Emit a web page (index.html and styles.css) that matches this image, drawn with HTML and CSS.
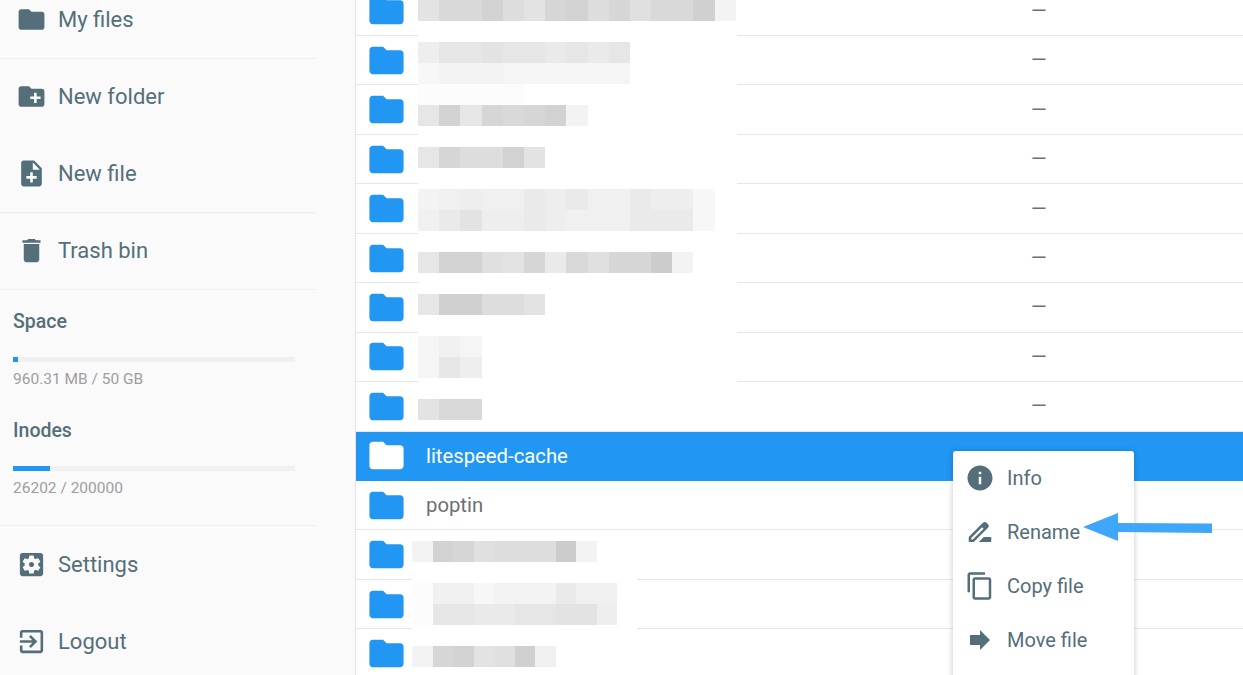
FILE: index.html
```html
<!DOCTYPE html>
<html lang="en">
<head>
<meta charset="UTF-8">
<title>File manager</title>
<link rel="stylesheet" href="styles.css">
</head>
<body>

<svg class="defs" aria-hidden="true">
    <symbol id="i-folder" viewBox="0 0 24 24"><path d="M10 4H4c-1.1 0-1.99.9-1.99 2L2 18c0 1.1.9 2 2 2h16c1.1 0 2-.9 2-2V8c0-1.1-.9-2-2-2h-8l-2-2z"/></symbol>
    <symbol id="i-new-folder" viewBox="0 0 24 24"><path d="M20 6h-8l-2-2H4c-1.11 0-1.99.89-1.99 2L2 18c0 1.11.89 2 2 2h16c1.11 0 2-.89 2-2V8c0-1.11-.89-2-2-2zm-1 8h-3v3h-2v-3h-3v-2h3V9h2v3h3v2z"/></symbol>
    <symbol id="i-new-file" viewBox="0 0 24 24"><path d="M14 2H6c-1.1 0-1.99.9-1.99 2L4 20c0 1.1.89 2 1.99 2H18c1.1 0 2-.9 2-2V8l-6-6zm2 14h-3v3h-2v-3H8v-2h3v-3h2v3h3v2zm-3-7V3.5L18.5 9H13z"/></symbol>
    <symbol id="i-trash" viewBox="0 0 24 24"><path d="M6 19c0 1.1.9 2 2 2h8c1.1 0 2-.9 2-2V7H6v12zM19 4h-3.5l-1-1h-5l-1 1H5v2h14V4z"/></symbol>
    <symbol id="i-settings" viewBox="0 0 24 24"><path d="M12 10c-1.1 0-2 .9-2 2s.9 2 2 2 2-.9 2-2-.9-2-2-2zm7-7H5c-1.11 0-2 .9-2 2v14c0 1.1.89 2 2 2h14c1.11 0 2-.9 2-2V5c0-1.1-.89-2-2-2zm-1.75 9c0 .23-.02.46-.05.68l1.48 1.16c.13.11.17.3.08.45l-1.4 2.42c-.09.15-.27.21-.43.15l-1.74-.7c-.36.28-.76.51-1.18.69l-.26 1.85c-.03.17-.18.3-.35.3h-2.8c-.17 0-.32-.13-.35-.29l-.26-1.85c-.43-.18-.82-.41-1.18-.69l-1.74.7c-.16.06-.34 0-.43-.15l-1.4-2.42c-.09-.15-.05-.34.08-.45l1.48-1.16c-.03-.23-.05-.46-.05-.69 0-.23.02-.46.05-.68l-1.48-1.16c-.13-.11-.17-.3-.08-.45l1.4-2.42c.09-.15.27-.21.43-.15l1.74.7c.36-.28.76-.51 1.18-.69l.26-1.85c.03-.17.18-.3.35-.3h2.8c.17 0 .32.13.35.29l.26 1.85c.43.18.82.41 1.18.69l1.74-.7c.16-.06.34 0 .43.15l1.4 2.42c.09.15.05.34-.08.45l-1.48 1.16c.03.23.05.46.05.69z"/></symbol>
    <symbol id="i-logout" viewBox="0 0 24 24"><path d="M10.09 15.59L11.5 17l5-5-5-5-1.41 1.41L12.67 11H3v2h9.67l-2.58 2.59zM19 3H5c-1.11 0-2 .9-2 2v4h2V5h14v14H5v-4H3v4c0 1.1.89 2 2 2h14c1.1 0 2-.9 2-2V5c0-1.1-.9-2-2-2z"/></symbol>
    <symbol id="i-info" viewBox="0 0 24 24"><path d="M12 2C6.48 2 2 6.48 2 12s4.48 10 10 10 10-4.48 10-10S17.52 2 12 2zm1 15h-2v-6h2v6zm0-8h-2V7h2v2z"/></symbol>
    <symbol id="i-rename" viewBox="0 0 24 24"><path d="M18.41 5.8L17.2 4.59c-.78-.78-2.05-.78-2.83 0l-2.68 2.68L3 15.96V20h4.04l8.74-8.74 2.63-2.63c.79-.78.79-2.05 0-2.83zM6.21 18H5v-1.21l8.66-8.66 1.21 1.21L6.21 18zM11 20l4-4h6v4H11z"/></symbol>
    <symbol id="i-copy" viewBox="0 0 24 24"><path d="M16 1H4c-1.1 0-2 .9-2 2v14h2V3h12V1zm3 4H8c-1.1 0-2 .9-2 2v14c0 1.1.9 2 2 2h11c1.1 0 2-.9 2-2V7c0-1.1-.9-2-2-2zm0 16H8V7h11v14z"/></symbol>
    <symbol id="i-move" viewBox="0 0 24 24"><path d="M12 8V4l8 8-8 8v-4H4V8z"/></symbol>
</svg>

<aside class="sidebar">
    <div class="nav-group first ruled">
        <a class="nav-item"><svg class="nav-icon"><use href="#i-folder"/></svg>My files</a>
    </div>
    <div class="nav-group ruled thick">
        <a class="nav-item"><svg class="nav-icon"><use href="#i-new-folder"/></svg>New folder</a>
        <a class="nav-item"><svg class="nav-icon"><use href="#i-new-file"/></svg>New file</a>
    </div>
    <div class="nav-group ruled">
        <a class="nav-item"><svg class="nav-icon"><use href="#i-trash"/></svg>Trash bin</a>
    </div>

    <div class="usage ruled">
        <h3>Space</h3>
        <div class="bar"><div class="bar-fill" style="width:1.92%"></div></div>
        <p>960.31 MB / 50 GB</p>
        <h3>Inodes</h3>
        <div class="bar"><div class="bar-fill" style="width:13.1%"></div></div>
        <p>26202 / 200000</p>
    </div>

    <div class="nav-group last">
        <a class="nav-item"><svg class="nav-icon"><use href="#i-settings"/></svg>Settings</a>
        <a class="nav-item"><svg class="nav-icon"><use href="#i-logout"/></svg>Logout</a>
    </div>
</aside>

<main class="files">
    <div class="file-list">
        <div class="file-row"><svg class="folder"><use href="#i-folder"/></svg><span class="file-name"></span><span class="file-size">—</span></div>
        <div class="file-row"><svg class="folder"><use href="#i-folder"/></svg><span class="file-name"></span><span class="file-size">—</span></div>
        <div class="file-row"><svg class="folder"><use href="#i-folder"/></svg><span class="file-name"></span><span class="file-size">—</span></div>
        <div class="file-row"><svg class="folder"><use href="#i-folder"/></svg><span class="file-name"></span><span class="file-size">—</span></div>
        <div class="file-row"><svg class="folder"><use href="#i-folder"/></svg><span class="file-name"></span><span class="file-size">—</span></div>
        <div class="file-row"><svg class="folder"><use href="#i-folder"/></svg><span class="file-name"></span><span class="file-size">—</span></div>
        <div class="file-row"><svg class="folder"><use href="#i-folder"/></svg><span class="file-name"></span><span class="file-size">—</span></div>
        <div class="file-row"><svg class="folder"><use href="#i-folder"/></svg><span class="file-name"></span><span class="file-size">—</span></div>
        <div class="file-row"><svg class="folder"><use href="#i-folder"/></svg><span class="file-name"></span><span class="file-size">—</span></div>
        <div class="file-row selected"><svg class="folder"><use href="#i-folder"/></svg><span class="file-name">litespeed-cache</span></div>
        <div class="file-row"><svg class="folder"><use href="#i-folder"/></svg><span class="file-name">poptin</span></div>
        <div class="file-row"><svg class="folder"><use href="#i-folder"/></svg><span class="file-name"></span></div>
        <div class="file-row"><svg class="folder"><use href="#i-folder"/></svg><span class="file-name"></span></div>
        <div class="file-row"><svg class="folder"><use href="#i-folder"/></svg><span class="file-name"></span></div>
    </div>

    <!-- redacted names, pixelated -->
    <div class="mosaic upper">
        <div class="line"><i class="e3"></i><i class="d9"></i><i class="d9"></i><i class="d2"></i><i class="dd"></i><i class="e3"></i><i class="d6"></i><i class="d2"></i><i class="dd"></i><i class="d6"></i><i class="e0"></i><i class="d9"></i><i class="d9"></i><i class="d0"></i><i class="f3"></i></div>
        <div class="line"></div>
        <div class="line"><i class="ee"></i><i class="e6"></i><i class="e6"></i><i class="e3"></i><i class="e6"></i><i class="e6"></i><i class="ea"></i><i class="e6"></i><i class="ea"></i><i class="e6"></i></div>
        <div class="line"><i class="f7"></i><i class="f3"></i><i class="f3"></i><i class="f3"></i><i class="f5"></i><i class="f5"></i><i class="f5"></i><i class="f5"></i><i class="f5"></i><i class="f5"></i></div>
        <div class="line"><i class="fc"></i><i class="fc"></i><i class="fc"></i><i class="fc"></i><i class="fc"></i></div>
        <div class="line"><i class="e6"></i><i class="d2"></i><i class="e6"></i><i class="d6"></i><i class="d9"></i><i class="d6"></i><i class="d2"></i><i class="f3"></i></div>
        <div class="line"></div>
        <div class="line"><i class="e6"></i><i class="d6"></i><i class="dd"></i><i class="dd"></i><i class="d2"></i><i class="e3"></i></div>
        <div class="line"></div>
        <div class="line"><i class="f3"></i><i class="f0"></i><i class="ee"></i><i class="f0"></i><i class="f0"></i><i class="ea"></i><i class="ee"></i><i class="ea"></i><i class="f0"></i><i class="f0"></i><i class="ea"></i><i class="ee"></i><i class="ee"></i><i class="f7"></i></div>
        <div class="line"><i class="f0"></i><i class="ea"></i><i class="e3"></i><i class="ee"></i><i class="ee"></i><i class="ea"></i><i class="ee"></i><i class="f0"></i><i class="f0"></i><i class="f0"></i><i class="ea"></i><i class="ea"></i><i class="ea"></i><i class="f7"></i></div>
        <div class="line"></div>
        <div class="line"><i class="e6"></i><i class="d2"></i><i class="d2"></i><i class="e0"></i><i class="e3"></i><i class="d6"></i><i class="ea"></i><i class="d9"></i><i class="e0"></i><i class="d6"></i><i class="d6"></i><i class="cc"></i><i class="f3"></i></div>
        <div class="line"></div>
        <div class="line"><i class="e6"></i><i class="d0"></i><i class="d0"></i><i class="dd"></i><i class="dd"></i><i class="e3"></i></div>
        <div class="line"></div>
        <div class="line"><i class="f5"></i><i class="f0"></i><i class="f5"></i></div>
        <div class="line"><i class="f5"></i><i class="e6"></i><i class="ee"></i></div>
        <div class="line"></div>
        <div class="line"><i class="e3"></i><i class="d9"></i><i class="d9"></i></div>
    </div>
    <div class="mosaic lower">
        <div class="line"><i class="f3"></i><i class="d2"></i><i class="d6"></i><i class="e0"></i><i class="dd"></i><i class="dd"></i><i class="dd"></i><i class="cc"></i><i class="f3"></i></div>
        <div class="line"></div>
        <div class="line"><i class="fc"></i><i class="f0"></i><i class="f0"></i><i class="f7"></i><i class="f3"></i><i class="f3"></i><i class="f3"></i><i class="ea"></i><i class="f0"></i><i class="f0"></i></div>
        <div class="line"><i class="fc"></i><i class="e6"></i><i class="e6"></i><i class="ea"></i><i class="ea"></i><i class="e6"></i><i class="e6"></i><i class="e3"></i><i class="e3"></i><i class="ee"></i></div>
        <div class="line"></div>
        <div class="line"><i class="f3"></i><i class="d6"></i><i class="d2"></i><i class="e3"></i><i class="e0"></i><i class="d0"></i><i class="f0"></i></div>
    </div>

    <ul class="context-menu">
        <li><svg class="menu-icon"><use href="#i-info"/></svg>Info</li>
        <li><svg class="menu-icon"><use href="#i-rename"/></svg>Rename</li>
        <li><svg class="menu-icon"><use href="#i-copy"/></svg>Copy file</li>
        <li><svg class="menu-icon"><use href="#i-move"/></svg>Move file</li>
    </ul>

    <svg class="callout" viewBox="0 0 130 28"><path d="M0 14L35 0V10L129 10.5V20L35 19V28z"/></svg>
</main>

</body>
</html>
```

FILE: styles.css
```css
/* ─── Layout ─────────────────────────────────────────────────── */
*{box-sizing:border-box;margin:0;padding:0}
body{
    font-family:Roboto,"Liberation Sans",sans-serif;
    display:flex;height:100vh;overflow:hidden;background:#fff;
}
.defs{display:none}

/* ─── Sidebar ────────────────────────────────────────────────── */
.sidebar{
    flex:0 0 356px;height:100%;overflow:hidden;
    background:#fafafa;border-right:1px solid #e4e4e4;
}
.nav-group{width:316px}
.nav-group.first{margin-top:-19px}
.nav-group.last{margin-top:1px}
.ruled{box-shadow:0 1px 0 #efefef}
.ruled.thick{box-shadow:0 1.5px 0 #efefef}
.nav-item{
    display:flex;align-items:center;gap:11px;
    height:77px;padding-left:16px;
    font-size:22px;color:#546e7a;
}
.nav-icon{width:31px;height:31px;fill:#546e7a;flex:none}

.usage{width:316px;height:236px;padding:21px 0 0 13px;color:#546e7a}
.usage h3{font-size:19.5px;font-weight:500;line-height:24px}
.usage h3 + .bar{margin-top:22.5px}
.usage p{font-size:15.5px;line-height:20px;margin:7.5px 0 30px;color:#9e9e9e}
.bar{width:282px;height:5px;background:#f0f0f0}
.bar-fill{height:100%;background:#2196f3}

/* ─── File list ──────────────────────────────────────────────── */
.files{position:relative;flex:1;height:100%;overflow:hidden}
.file-list{margin-top:-13.4px}
.file-row{
    display:flex;align-items:center;
    height:49.45px;padding-left:9.5px;
    border-bottom:1px solid #e6e6e6;
    font-size:20.3px;color:#6f6f6f;
}
.folder{width:41px;height:41px;fill:#2196f3;flex:none}
.file-name{margin-left:19.5px}
.file-size{position:absolute;left:675px;font-size:20px}
.file-row.selected{background:#2196f3;color:#fff;border-bottom-color:#2196f3}
.file-row.selected .folder{fill:#fff}

/* ─── Pixelated names ────────────────────────────────────────── */
.mosaic{position:absolute;background:#fff}
.mosaic.upper{left:62px;top:0;width:319px;height:431px}
.mosaic.lower{left:56px;top:541px;width:225px;height:126px}
.line{display:flex;height:21px}
.line i{flex:0 0 21.2px}
.lower .line i{flex-basis:20.5px}
.cc{background:#ccc}
.d0{background:#d0d0d0}
.d2{background:#d2d2d2}
.d6{background:#d6d6d6}
.d9{background:#d9d9d9}
.dd{background:#ddd}
.e0{background:#e0e0e0}
.e3{background:#e3e3e3}
.e6{background:#e6e6e6}
.ea{background:#eaeaea}
.ee{background:#eee}
.f0{background:#f0f0f0}
.f3{background:#f3f3f3}
.f5{background:#f5f5f5}
.f7{background:#f7f7f7}
.fc{background:#fcfcfc}

/* ─── Context menu ───────────────────────────────────────────── */
.context-menu{
    position:absolute;left:597px;top:451px;width:181px;height:250px;
    list-style:none;background:#fff;border-radius:3px;
    box-shadow:0 1px 6px rgba(0,0,0,.22);
}
.context-menu li{
    display:flex;align-items:center;gap:12px;
    height:54px;padding-left:12px;
    font-size:20px;color:#546e7a;
}
.menu-icon{width:30px;height:30px;fill:#546e7a;flex:none}

/* arrow pasted over the screenshot */
.callout{position:absolute;left:727px;top:513px;width:130px;height:28px;fill:#3ea6fb}
```
